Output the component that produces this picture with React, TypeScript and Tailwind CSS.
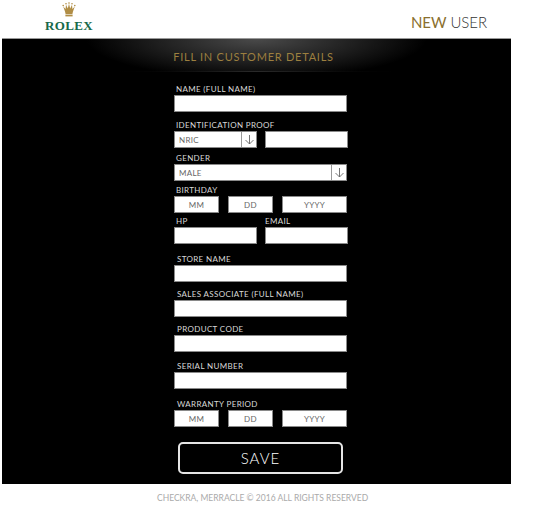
const labelCls = 'block h-[12px] pl-[2px] text-[8px] leading-[12px] tracking-[0.35px] text-[#d8d8d8] whitespace-nowrap'
const boxCls = 'h-[17px] bg-white border border-[#8a8a8a] flex items-center text-[8px] text-[#666] tracking-[0.3px]'

function Label({ text, className = '' }: { text: string; className?: string }) {
  return <div className={`${labelCls} ${className}`}>{text}</div>
}

function Arrow() {
  return (
    <span className="w-[15px] h-full border-l border-[#999] flex items-center justify-center shrink-0">
      <svg width="11" height="11" viewBox="0 0 11 11" fill="none" stroke="#666" strokeWidth="0.9">
        <path d="M5.5 1v9M1.5 6l4 4 4-4" />
      </svg>
    </span>
  )
}

function DateRow() {
  return (
    <div className="flex">
      <div className={`${boxCls} w-[45px] justify-center`}>MM</div>
      <div className={`${boxCls} w-[45px] justify-center ml-[9px]`}>DD</div>
      <div className={`${boxCls} w-[65px] justify-center ml-[9px]`}>YYYY</div>
    </div>
  )
}

function Crown() {
  return (
    <svg width="14" height="16" viewBox="0 0 14 16" fill="#b08d45">
      <path d="M3 9.5 1.2 4.5l2.4 2.6L4 2.8l1.8 3.8L7 1.8l1.2 4.8L10 2.8l.4 4.3 2.4-2.6L11 9.5 10.4 12H3.6z" />
      <rect x="3.4" y="12.6" width="7.2" height="1.8" />
      <circle cx="1.2" cy="3.6" r=".8" />
      <circle cx="4" cy="1.8" r=".8" />
      <circle cx="7" cy="1" r=".8" />
      <circle cx="10" cy="1.8" r=".8" />
      <circle cx="12.8" cy="3.6" r=".8" />
    </svg>
  )
}

export default function App() {
  return (
    <div className="w-[545px] h-[514px] bg-white font-['Lato',sans-serif] overflow-hidden">
      <header className="h-[38px] flex">
        <div className="w-[94px] pl-[44px] pt-[2px] flex flex-col items-center">
          <Crown />
          <span className="font-['Liberation_Serif',serif] font-bold text-[13px] leading-[13px] tracking-[0.4px] text-[#17694a] mt-[1px]">ROLEX</span>
        </div>
        <div className="ml-auto mr-[58px] pt-[13px] text-[15px] leading-[18px] tracking-[-0.05px] text-[#333] font-light">
          <span className="text-[#8a6f2e] font-normal">NEW</span> USER
        </div>
      </header>

      <main className="ml-[2px] w-[509px] h-[446px] bg-black border-t border-[#999]">
        <div className="h-[32px] flex items-center justify-center pr-[6px] pt-[4px] bg-[radial-gradient(ellipse_170px_40px_at_50%_0%,#4a4a4a,#000)] text-[#9c7f3f] text-[11px] tracking-[0.75px]">
          FILL IN CUSTOMER DETAILS
        </div>
        <div className="h-px mx-[90px] bg-gradient-to-r from-black via-[#2a2a2a] to-black" />
        <form className="w-[176px] ml-[172px]">
          <Label text="NAME (FULL NAME)" className="mt-[11px]" />
          <div className={`${boxCls} w-[173px]`} />

          <Label text="IDENTIFICATION PROOF" className="mt-[7px]" />
          <div className="flex">
            <div className={`${boxCls} w-[83px] pl-[4px] justify-between`}>NRIC<Arrow /></div>
            <div className={`${boxCls} w-[83px] ml-[8px]`} />
          </div>

          <Label text="GENDER" className="mt-[4px]" />
          <div className={`${boxCls} w-[173px] pl-[4px] justify-between`}>MALE<Arrow /></div>

          <Label text="BIRTHDAY" className="mt-[3px]" />
          <DateRow />

          <div className="flex mt-[2px]">
            <Label text="HP" className="w-[91px]" />
            <Label text="EMAIL" className="!pl-0" />
          </div>
          <div className="flex">
            <div className={`${boxCls} w-[83px]`} />
            <div className={`${boxCls} w-[83px] ml-[8px]`} />
          </div>

          <Label text="STORE NAME" className="mt-[9px] !pl-[3px]" />
          <div className={`${boxCls} w-[173px]`} />

          <Label text="SALES ASSOCIATE (FULL NAME)" className="mt-[6px] !pl-[3px] tracking-[0.5px]" />
          <div className={`${boxCls} w-[173px]`} />

          <Label text="PRODUCT CODE" className="mt-[6px] !pl-[3px]" />
          <div className={`${boxCls} w-[173px]`} />

          <Label text="SERIAL NUMBER" className="mt-[8px] !pl-[3px]" />
          <div className={`${boxCls} w-[173px]`} />

          <Label text="WARRANTY PERIOD" className="mt-[9px] !pl-[3px]" />
          <DateRow />

          <button type="button" className="block ml-[4px] mt-[15px] w-[165px] h-[32px] rounded-[5px] border-2 border-[#e5e5e5] text-white text-[15px] font-light tracking-[1px]">
            SAVE
          </button>
        </form>
      </main>

      <footer className="w-[508px] ml-[2px] pl-[155px] pt-[8px] text-[8.5px] leading-[12px] tracking-[0px] text-[#aaa] whitespace-nowrap">
        CHECKRA, MERRACLE © 2016 ALL RIGHTS RESERVED
      </footer>
    </div>
  )
}
